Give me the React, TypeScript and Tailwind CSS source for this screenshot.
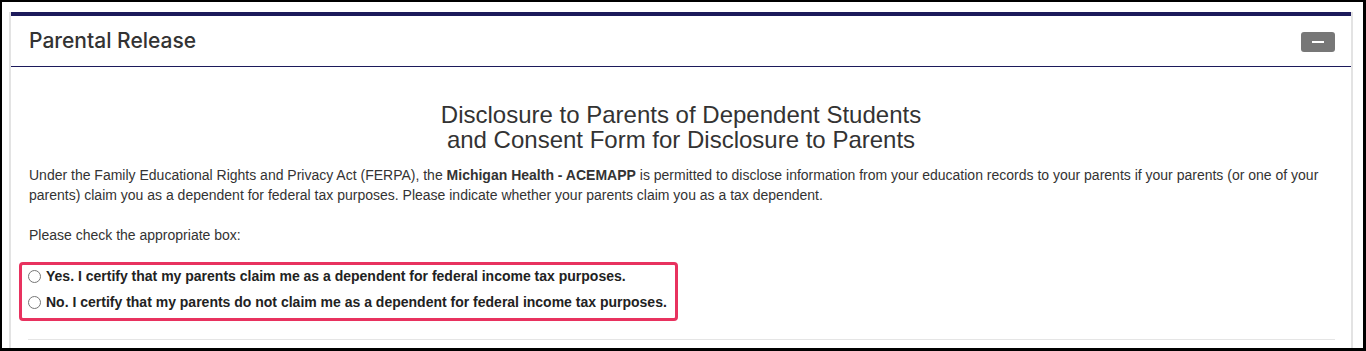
function Radio({ label }: { label: string }) {
  return (
    <label className="flex items-center h-[20px] cursor-pointer">
      <span className="w-[13px] h-[13px] rounded-full border border-[#767676] bg-white mr-[5px] shrink-0" />
      <span className="font-bold text-[14px] text-[#222]">{label}</span>
    </label>
  );
}

function ParentalRelease() {
  return (
    <div className="border-x-2 border-[#e3e3e3] bg-white">
      <div className="border-t-4 border-[#1c1a5b]">
        <div className="h-[51px] flex items-center justify-between pl-[18px] pr-[16px] border-b border-[#1c1a5b]">
          <h2
            className="text-[21px] font-medium text-[#333]"
            style={{ fontFamily: '"Inter", "Noto Sans", sans-serif' }}
          >
            Parental Release
          </h2>
          <button className="w-[34px] h-[20px] rounded-[3px] bg-[#777] flex items-center justify-center mt-[1px]">
            <span className="block w-[12px] h-[2px] bg-white" />
          </button>
        </div>
      </div>

      <div className="px-[18px] pt-[35px] text-[#333]">
        <h3 className="text-center text-[24px] leading-[25px]">
          Disclosure to Parents of Dependent Students
          <br />
          and Consent Form for Disclosure to Parents
        </h3>

        <p className="mt-[13px] text-[14px] leading-[20px]">
          Under the Family Educational Rights and Privacy Act (FERPA), the{" "}
          <b>Michigan Health - ACEMAPP</b> is permitted to disclose information
          from your education records to your parents if your parents (or one
          of your parents) claim you as a dependent for federal tax purposes.
          Please indicate whether your parents claim you as a tax dependent.
        </p>

        <p className="mt-[20px] text-[14px] leading-[20px]">
          Please check the appropriate box:
        </p>

        <div className="mt-[17px] -ml-[10px] w-[659px] border-[3px] border-[#e8325f] rounded-[4px] pl-[6px] pt-[1px] pb-[6px] flex flex-col gap-[6px]">
          <Radio label="Yes. I certify that my parents claim me as a dependent for federal income tax purposes." />
          <Radio label="No. I certify that my parents do not claim me as a dependent for federal income tax purposes." />
        </div>

        <div className="mt-[18px] mr-[-2px] -ml-[1px] border-t border-[#e5e5e5]" />
        <div className="h-[20px]" />
      </div>
    </div>
  );
}

export default function App() {
  return (
    <div
      className="h-[351px] overflow-hidden bg-white border-t-2 border-l-2 border-r-[3px] border-b-[3px] border-black"
      style={{ fontFamily: '"Liberation Sans", Arial, sans-serif' }}
    >
      <div className="h-full overflow-hidden pl-[7px] pr-[10px] pt-[10px]">
        <ParentalRelease />
      </div>
    </div>
  );
}
